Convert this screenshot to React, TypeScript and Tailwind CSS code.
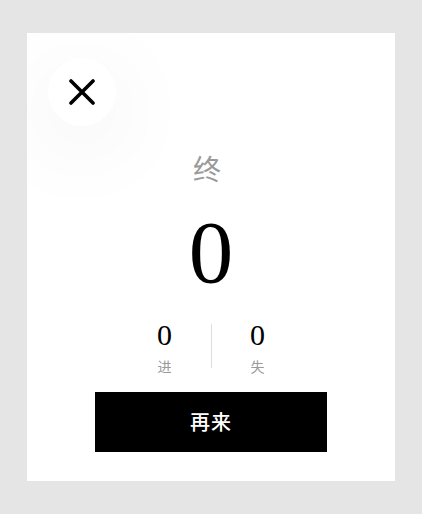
export default function App() {
  return (
    <div className="flex min-h-[514px] w-full items-center justify-center bg-[#e5e5e5]">
      <div className="relative flex h-[448px] w-[368px] flex-col items-center overflow-hidden bg-white">
        {/* close */}
        <button
          aria-label="close"
          className="absolute left-[21px] top-[25px] flex h-[68px] w-[68px] items-center justify-center rounded-full bg-white shadow-[0_18px_90px_rgba(0,0,0,0.08)]"
        >
          <svg width="26" height="26" viewBox="0 0 26 26" fill="none">
            <path d="M2 2L24 24M24 2L2 24" stroke="#000" strokeWidth="3.6" strokeLinecap="round" />
          </svg>
        </button>

        <div className="mt-[121px] pr-[8px] text-[28px] leading-none text-[#9a9a9a] [font-family:'Noto_Sans_CJK_SC',sans-serif]">
          终
        </div>

        <div className="mt-[26px] text-[89px] leading-none text-black [font-family:'Liberation_Serif',serif]">
          0
        </div>

        <div className="mt-[23px] flex items-start">
          <div className="flex w-[92px] flex-col items-center">
            <span className="text-[30px] leading-none text-black [font-family:'Liberation_Serif',serif]">0</span>
            <span className="mt-[9px] text-[14px] leading-none text-[#9a9a9a] [font-family:'Noto_Sans_CJK_SC',sans-serif]">进</span>
          </div>
          <div className="mt-[4px] h-[44px] w-px bg-[#dddddd]" />
          <div className="flex w-[92px] flex-col items-center">
            <span className="text-[30px] leading-none text-black [font-family:'Liberation_Serif',serif]">0</span>
            <span className="mt-[9px] text-[14px] leading-none text-[#9a9a9a] [font-family:'Noto_Sans_CJK_SC',sans-serif]">失</span>
          </div>
        </div>

        <button className="mt-[19px] flex h-[60px] w-[232px] items-center justify-center bg-black text-[20px] font-medium tracking-[1px] text-white [font-family:'Noto_Sans_CJK_SC',sans-serif]">
          再来
        </button>
      </div>
    </div>
  );
}
